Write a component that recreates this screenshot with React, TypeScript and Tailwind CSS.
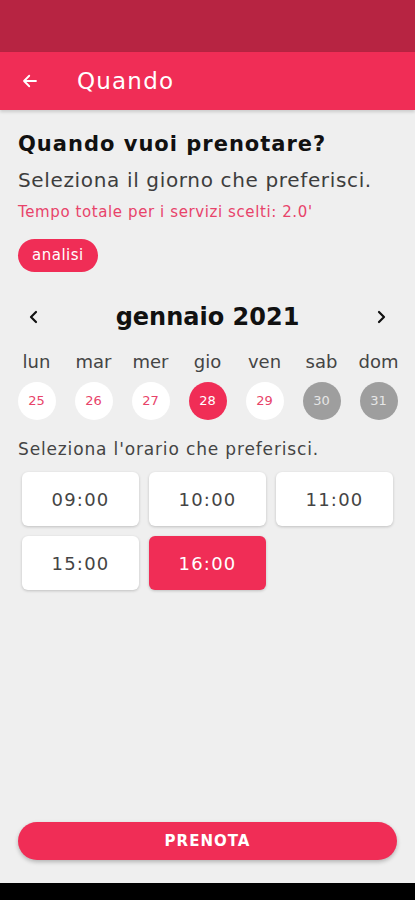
import React from "react";

const days = [
  { w: "lun", d: "25", s: "n" },
  { w: "mar", d: "26", s: "n" },
  { w: "mer", d: "27", s: "n" },
  { w: "gio", d: "28", s: "sel" },
  { w: "ven", d: "29", s: "n" },
  { w: "sab", d: "30", s: "off" },
  { w: "dom", d: "31", s: "off" },
];

const times = ["09:00", "10:00", "11:00", "15:00", "16:00"];

export default function App() {
  return (
    <div
      className="w-[415px] h-[900px] flex flex-col bg-[#efefef] overflow-hidden"
      style={{ fontFamily: "'DejaVu Sans', 'Noto Sans', sans-serif" }}
    >
      <div className="h-[52px] bg-[#b72442] shrink-0" />
      <div className="h-[58px] bg-[#f02d56] shrink-0 flex items-center shadow-[0_2px_3px_rgba(0,0,0,0.15)]">
        <svg className="ml-[21px]" width="18" height="18" viewBox="0 0 24 24" fill="none" stroke="white" strokeWidth="2.4" strokeLinecap="round" strokeLinejoin="round">
          <path d="M20 12H4M11 5l-7 7 7 7" />
        </svg>
        <span className="ml-[38px] text-white text-[23px] tracking-[1.2px] leading-none">Quando</span>
      </div>
      <div className="flex-1 flex flex-col px-[18px]">
        <div className="mt-[20px] text-[21px] font-bold tracking-[1px] text-[#111] leading-[28px]">Quando vuoi prenotare?</div>
        <div className="mt-[9px] text-[20px] tracking-[0.65px] text-[#3d3d3d] leading-[26px]">Seleziona il giorno che preferisci.</div>
        <div className="mt-[9px] text-[15px] tracking-[0.6px] text-[#e8436a] leading-[20px]">Tempo totale per i servizi scelti: 2.0'</div>
        <div className="mt-[17px] self-start h-[33px] px-[14px] rounded-full bg-[#f02d56] text-white text-[15px] tracking-[0.5px] flex items-center">analisi</div>
        <div className="mt-[30px] flex items-center justify-between px-[10px] h-[30px]">
          <svg width="12" height="14" viewBox="0 0 12 14" fill="none" stroke="#111" strokeWidth="2.2" strokeLinecap="round" strokeLinejoin="round">
            <path d="M8 2L3 7l5 5" />
          </svg>
          <span className="text-[24px] font-bold text-[#111] leading-none">gennaio 2021</span>
          <svg width="12" height="14" viewBox="0 0 12 14" fill="none" stroke="#111" strokeWidth="2.2" strokeLinecap="round" strokeLinejoin="round">
            <path d="M4 2l5 5-5 5" />
          </svg>
        </div>
        <div className="-mx-[10px] mt-[19px] grid grid-cols-7">
          {days.map((x) => (
            <div key={x.w} className="flex flex-col items-center">
              <span className="text-[18px] text-[#444] leading-[22px]">{x.w}</span>
              <div
                className={
                  "mt-[9px] w-[38px] h-[38px] rounded-full flex items-center justify-center text-[13px] " +
                  (x.s === "sel"
                    ? "bg-[#f02d56] text-white"
                    : x.s === "off"
                    ? "bg-[#9e9e9e] text-[#e6e6e6]"
                    : "bg-white text-[#e8436a]")
                }
              >
                {x.d}
              </div>
            </div>
          ))}
        </div>
        <div className="mt-[18px] text-[17px] tracking-[0.85px] text-[#444] leading-[22px]">Seleziona l'orario che preferisci.</div>
        <div className="mt-[12px] px-[4px] grid grid-cols-3 gap-[10px]">
          {times.map((t) => (
            <div
              key={t}
              className={
                "h-[54px] rounded-[6px] flex items-center justify-center text-[18px] tracking-[1.2px] shadow-[0_1px_3px_rgba(0,0,0,0.2)] " +
                (t === "16:00" ? "bg-[#f02d56] text-white" : "bg-white text-[#444]")
              }
            >
              {t}
            </div>
          ))}
        </div>
        <div className="flex-1" />
        <div className="mb-[23px] h-[38px] rounded-full bg-[#f02d56] text-white text-[15px] font-bold tracking-[1px] flex items-center justify-center shadow-[0_2px_4px_rgba(0,0,0,0.25)]">
          PRENOTA
        </div>
      </div>
      <div className="h-[17px] bg-black shrink-0" />
    </div>
  );
}
